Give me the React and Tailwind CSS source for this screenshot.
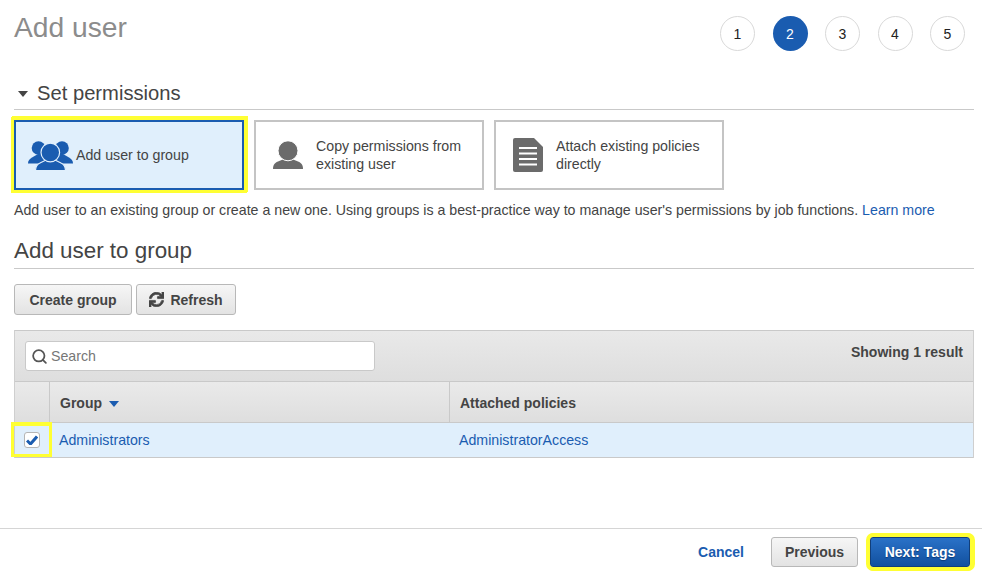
import { Search } from "lucide-react";
import { FaSync } from "react-icons/fa";

const steps = [1, 2, 3, 4, 5];

function GroupIcon() {
  return (
    <svg width="45" height="29" viewBox="0 0 45 29" className="shrink-0">
      <g fill="#1a5cb0">
        <circle cx="10.500" cy="7" r="6.800" />
        <circle cx="34" cy="7" r="6.800" />
        <path d="M0 22.500c0-3 1.500-4.500 4-6l6-3.500h10v9.500z" />
        <path d="M45 22.500c0-3-1.500-4.500-4-6l-6-3.500h-10v9.500z" />
      </g>
      <g fill="#1a5cb0" stroke="#e0effc" strokeWidth="1.200">
        <path d="M7.500 30c0-4 1-6.500 4.500-8l5-2.500h11l5 2.500c3.500 1.500 4.500 4 4.500 8z" />
        <circle cx="22.300" cy="11.500" r="9.300" />
      </g>
    </svg>
  );
}

function UserIcon() {
  return (
    <svg width="30" height="28" viewBox="0 0 30 28" className="shrink-0">
      <path d="M0 28c0-4 1.500-6 5-7.500l6-2.500h8l6 2.500c3.500 1.500 5 3.500 5 7.500z" fill="#6b6b6b" />
      <circle cx="15" cy="9.800" r="10" fill="#6b6b6b" stroke="#fff" strokeWidth="1" />
    </svg>
  );
}

function DocIcon() {
  return (
    <svg width="30" height="34" viewBox="0 0 30 34" className="shrink-0">
      <path d="M2 0h19l9 9v23a2 2 0 0 1-2 2h-26a2 2 0 0 1-2-2v-30a2 2 0 0 1 2-2z" fill="#6b6b6b" />
      <path d="M6 9h18v2h-18zM6 14.500h18v2h-18zM6 20h18v2h-18zM6 25.500h18v2h-18z" fill="#fff" />
    </svg>
  );
}

function Card({ selected, icon, children }) {
  return (
    <div
      className={
        selected
          ? "w-[230px] h-[70px] flex items-center gap-[3px] pl-[12px] border-2 border-[#1a5cb0] bg-[#e0effc] text-[#444] text-[14.2px] leading-[18px] shadow-[0_0_0_3px_#ffff33,1px_-1px_0_3px_#ffff33]"
          : "w-[230px] h-[70px] flex items-center gap-[13px] pl-[17px] border-2 border-[#c4c4c4] bg-white text-[#444] text-[14.2px] leading-[18px]"
      }
    >
      {icon}
      <div>{children}</div>
    </div>
  );
}

export default function App() {
  return (
    <div className="w-[982px] h-[574px] flex flex-col bg-white text-[#444] font-['Liberation_Sans',Arial,sans-serif] overflow-hidden">
      <div className="flex flex-col flex-1 pl-[14px] pr-[8px]">
        <div className="h-[80px] flex items-start justify-between pr-[9px]">
          <h1 className="pt-[7px] text-[28.2px] leading-[40px] text-[#8c8c8c]">Add user</h1>
          <div className="flex gap-[17.5px] pt-[16px]">
            {steps.map((n) => (
              <div
                key={n}
                className={
                  n === 2
                    ? "w-[35px] h-[35px] rounded-full flex items-center justify-center text-sm bg-[#1a5cb0] text-white"
                    : "w-[35px] h-[35px] rounded-full flex items-center justify-center text-sm bg-white border border-[#d9d9d9] text-[#222]"
                }
              >
                {n}
              </div>
            ))}
          </div>
        </div>

        <div className="h-[30px] flex items-center border-b border-[#c9c9c9] pb-[4px]">
          <svg width="10" height="6" viewBox="0 0 10 6" className="ml-[4px] mr-[9px] mt-[3px]">
            <path d="M0 0h10l-5 6z" fill="#444" />
          </svg>
          <h2 className="text-[20.2px] leading-[24px] text-[#444]">Set permissions</h2>
        </div>

        <div className="mt-[10px] flex gap-[10px]">
          <Card selected icon={<GroupIcon />}>Add user to group</Card>
          <Card icon={<UserIcon />}>
            Copy permissions from
            <br />
            existing user
          </Card>
          <Card icon={<DocIcon />}>
            Attach existing policies
            <br />
            directly
          </Card>
        </div>

        <p className="mt-[10px] text-[14.2px] leading-[20px] text-[#444]">
          Add user to an existing group or create a new one. Using groups is a best-practice way to manage user's permissions by job functions.{" "}
          <a className="text-[#1a5cb0]">Learn more</a>
        </p>

        <div className="h-[49px] flex items-end pb-[4px] border-b border-[#c9c9c9]">
          <h2 className="text-[22.4px] leading-[26px] text-[#444]">Add user to group</h2>
        </div>

        <div className="mt-[15px] flex gap-[4px]">
          <button className="w-[118px] h-[31px] rounded-[3px] border border-[#b8b8b8] bg-gradient-to-b from-[#f6f6f6] to-[#e3e3e3] text-sm font-bold text-[#444]">
            Create group
          </button>
          <button className="w-[100px] h-[31px] rounded-[3px] border border-[#b8b8b8] bg-gradient-to-b from-[#f6f6f6] to-[#e3e3e3] text-sm font-bold text-[#444] flex items-center justify-center gap-[6px]">
            <FaSync className="w-[15px] h-[15px] stroke-[24px]" />
            Refresh
          </button>
        </div>

        <div className="mt-[15px] border-x border-[#cfcfcf]">
          <div className="h-[52px] flex items-center justify-between pl-[10px] pr-[10px] border-y border-[#c9c9c9] bg-gradient-to-b from-[#e9e9e9] to-[#dedede]">
            <div className="w-[350px] h-[30px] flex items-center gap-[3px] pl-[5px] rounded-[3px] border border-[#c9c9c9] bg-white text-[14.2px] text-[#777]">
              <Search size={17} strokeWidth={2.500} className="text-[#555]" />
              <span className="pt-[2px]">Search</span>
            </div>
            <span className="text-sm font-bold text-[#444] mb-[8px]">Showing 1 result</span>
          </div>
          <div className="h-[41px] grid grid-cols-[34px_400px_1fr] border-b border-[#c9c9c9] bg-gradient-to-b from-[#eaeaea] to-[#dedede] text-sm font-bold text-[#444]">
            <div />
            <div className="flex items-center gap-[7px] pl-[10px] pt-[1px] border-l border-[#c9c9c9]">
              Group
              <svg width="10" height="6" viewBox="0 0 10 6" className="mt-[2px]">
                <path d="M0 0h10l-5 6z" fill="#1a5cb0" />
              </svg>
            </div>
            <div className="flex items-center pl-[10px] pt-[1px] border-l border-[#c9c9c9]">Attached policies</div>
          </div>
          <div className="h-[35px] grid grid-cols-[34px_400px_1fr] border-b border-[#c9c9c9] bg-[#e0effc] text-[14.2px] text-[#1a5cb0]">
            <div className="relative flex items-center justify-center">
              <div className="absolute left-[-4px] top-[-1px] w-[41px] h-[35px] border-[3px] border-t-[4px] border-[#ffff33]" />
              <div className="w-[16px] h-[16px] flex items-center justify-center rounded-[3px] border border-[#b5b5b5] bg-white">
                <svg width="12" height="10" viewBox="0 0 12 10">
                  <path d="M1 5.500l3.500 3.500 6.500-7.500" fill="none" stroke="#1a5cb0" strokeWidth="3" />
                </svg>
              </div>
            </div>
            <div className="flex items-center pl-[10px] pt-[2px]">Administrators</div>
            <div className="flex items-center pl-[10px] pt-[2px]">AdministratorAccess</div>
          </div>
        </div>
      </div>

      <div className="h-[46px] flex items-center justify-end border-t border-[#d5d5d5] pr-[12px]">
        <a className="text-sm font-bold text-[#1a5cb0] mr-[27px]">Cancel</a>
        <button className="w-[87px] h-[30px] rounded-[3px] border border-[#b8b8b8] bg-gradient-to-b from-[#f6f6f6] to-[#e3e3e3] text-sm font-bold text-[#444] mr-[12px]">
          Previous
        </button>
        <button className="w-[100px] h-[30px] rounded-[3px] border border-[#123f7a] bg-gradient-to-b from-[#2a72c8] to-[#11509f] text-sm font-bold text-white [text-shadow:0_1px_1px_#0a3a7a] shadow-[0_0_0_4px_#ffff33,1px_0_0_4px_#ffff33]">
          Next: Tags
        </button>
      </div>
    </div>
  );
}
